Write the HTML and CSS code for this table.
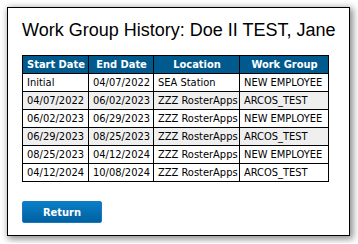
FILE: index.html
```html
<!DOCTYPE html>
<html>
<head>
<meta charset="utf-8">
<link rel="stylesheet" href="styles.css">
</head>
<body>
<div class="panel">
  <h1 class="title">Work Group History: Doe II TEST, Jane</h1>
  <table class="grid">
    <colgroup><col class="c1"><col class="c2"><col class="c3"><col class="c4"></colgroup>
    <thead>
      <tr><th>Start Date</th><th>End Date</th><th>Location</th><th>Work Group</th></tr>
    </thead>
    <tbody>
      <tr><td>Initial</td><td>04/07/2022</td><td>SEA Station</td><td>NEW EMPLOYEE</td></tr>
      <tr class="alt"><td>04/07/2022</td><td>06/02/2023</td><td>ZZZ RosterApps</td><td>ARCOS_TEST</td></tr>
      <tr><td>06/02/2023</td><td>06/29/2023</td><td>ZZZ RosterApps</td><td>NEW EMPLOYEE</td></tr>
      <tr class="alt"><td>06/29/2023</td><td>08/25/2023</td><td>ZZZ RosterApps</td><td>ARCOS_TEST</td></tr>
      <tr><td>08/25/2023</td><td>04/12/2024</td><td>ZZZ RosterApps</td><td>NEW EMPLOYEE</td></tr>
      <tr><td>04/12/2024</td><td>10/08/2024</td><td>ZZZ RosterApps</td><td>ARCOS_TEST</td></tr>
    </tbody>
  </table>
  <button class="btn" type="button">Return</button>
</div>
</body>
</html>
```
FILE: styles.css
```css
html, body {
  margin: 0;
  padding: 0;
  background: #ffffff;
}
.panel {
  margin: 7px;
  border: 1px solid #000;
  background: #fff;
  box-shadow: 2px 2px 7px 1px #8a8a8a;
  padding: 0 14px;
  box-sizing: border-box;
  width: 343px;
  height: 229px;
  display: flex;
  flex-direction: column;
  align-items: flex-start;
}
.title {
  font-family: "Liberation Sans", Arial, sans-serif;
  font-weight: normal;
  font-size: 18px;
  white-space: nowrap;
  color: #000;
  margin: 11px 0 0 0;
  line-height: 22px;
}
.grid {
  margin-top: 14px;
  border-collapse: collapse;
  table-layout: fixed;
  width: 306px;
  font-family: "DejaVu Sans Condensed", "DejaVu Sans", sans-serif;
  font-size: 11px;
  color: #000;
}
.grid th, .grid td {
  border: 1px solid #000;
  height: 17px;
  padding: 0 3px 0 4px;
  white-space: nowrap;
  overflow: hidden;
}
.grid th {
  background: #005a8e;
  color: #fff;
  font-weight: bold;
  text-align: center;
}
.grid td {
  text-align: left;
}
.grid tr.alt td {
  background: #efefef;
}
.c1 { width: 66px; }
.c2 { width: 65px; }
.c3 { width: 86px; }
.c4 { width: 89px; }
.btn {
  margin-top: 19px;
  width: 80px;
  height: 22px;
  border: 1px solid #1a78c0;
  border-radius: 2px;
  background: linear-gradient(#0a7fc8, #00609f);
  color: #fff;
  font-family: "DejaVu Sans Condensed", "DejaVu Sans", sans-serif;
  font-weight: bold;
  font-size: 11px;
  padding: 0;
}
```
